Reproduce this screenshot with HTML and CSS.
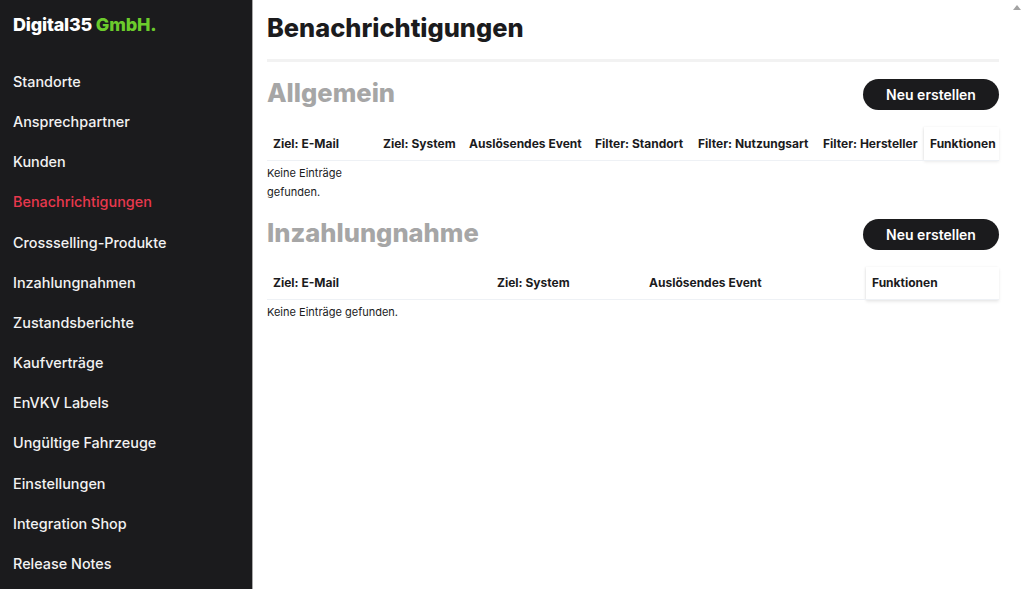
FILE: index.html
```html
<!DOCTYPE html>
<html lang="de">
<head>
    <meta charset="UTF-8">
    <meta name="viewport" content="width=device-width, initial-scale=1.0">
    <title>Benachrichtigungen</title>
    <link rel="stylesheet" href="styles.css">
</head>
<body>
    <aside class="sidebar">
        <div class="logo">Digital35 <span class="logo-accent">GmbH.</span></div>
        <nav class="side-nav">
            <a href="#">Standorte</a>
            <a href="#">Ansprechpartner</a>
            <a href="#">Kunden</a>
            <a href="#" class="active">Benachrichtigungen</a>
            <a href="#">Crossselling-Produkte</a>
            <a href="#">Inzahlungnahmen</a>
            <a href="#">Zustandsberichte</a>
            <a href="#">Kaufverträge</a>
            <a href="#">EnVKV Labels</a>
            <a href="#">Ungültige Fahrzeuge</a>
            <a href="#">Einstellungen</a>
            <a href="#">Integration Shop</a>
            <a href="#">Release Notes</a>
        </nav>
    </aside>

    <main class="main">
        <div class="content">
            <h1 class="page-title">Benachrichtigungen</h1>

            <section class="block">
                <div class="block-head">
                    <h2 class="block-title">Allgemein</h2>
                    <button class="btn-create">Neu erstellen</button>
                </div>
                <table class="data-table">
                    <thead>
                        <tr>
                            <th class="w-110">Ziel: E-Mail</th>
                            <th class="w-86">Ziel: System</th>
                            <th class="w-126">Auslösendes Event</th>
                            <th class="w-103">Filter: Standort</th>
                            <th class="w-125">Filter: Nutzungsart</th>
                            <th class="w-107">Filter: Hersteller</th>
                            <th class="sticky-col">Funktionen</th>
                        </tr>
                    </thead>
                    <tbody>
                        <tr>
                            <td class="empty">Keine Einträge gefunden.</td>
                            <td></td><td></td><td></td><td></td><td></td><td></td>
                        </tr>
                    </tbody>
                </table>
            </section>

            <section class="block">
                <div class="block-head">
                    <h2 class="block-title">Inzahlungnahme</h2>
                    <button class="btn-create">Neu erstellen</button>
                </div>
                <table class="data-table">
                    <thead>
                        <tr>
                            <th class="w-224">Ziel: E-Mail</th>
                            <th class="w-152">Ziel: System</th>
                            <th class="w-223">Auslösendes Event</th>
                            <th class="sticky-col">Funktionen</th>
                        </tr>
                    </thead>
                    <tbody>
                        <tr>
                            <td class="empty nowrap">Keine Einträge gefunden.</td>
                            <td></td><td></td><td></td>
                        </tr>
                    </tbody>
                </table>
            </section>
        </div>
        <div class="scrollbar"><span class="scroll-arrow"></span></div>
    </main>
</body>
</html>
```

FILE: styles.css
```css
* {
    box-sizing: border-box;
}
html, body {
    height: 100%;
}
body {
    margin: 0;
    display: flex;
    font-family: Inter, "Noto Sans", sans-serif;
    background-color: #fff;
    color: #1b1b1d;
    overflow: hidden;
}

/* Sidebar */
.sidebar {
    width: 253px;
    flex-shrink: 0;
    background-color: #1b1b1d;
    border-right: 1px solid #a8a8a8;
    padding: 14px 0 0 13px;
}
.logo {
    color: #fff;
    font-weight: 800;
    font-size: 18px;
    letter-spacing: -0.2px;
    height: 22px;
    line-height: 22px;
}
.logo-accent {
    color: #6ccb2c;
}
.side-nav {
    display: flex;
    flex-direction: column;
    margin-top: 36px;
}
.side-nav a {
    color: #f2f2f2;
    text-decoration: none;
    font-size: 14.4px;
    font-weight: 500;
    height: 40.17px;
    line-height: 20px;
}
.side-nav a.active {
    color: #e8384d;
}

/* Main */
.main {
    flex: 1;
    display: flex;
}
.content {
    flex: 1;
    padding: 0 10px 0 14px;
}
.scrollbar {
    width: 15px;
    flex-shrink: 0;
    display: flex;
    justify-content: center;
    padding-top: 5px;
}
.scroll-arrow {
    width: 0;
    height: 0;
    border-left: 4px solid transparent;
    border-right: 4px solid transparent;
    border-bottom: 5px solid #a3a3a3;
}
.page-title {
    margin: 0;
    padding: 14px 0 17px;
    font-size: 25.4px;
    font-weight: 800;
    line-height: 28px;
    color: #1b1b1d;
    border-bottom: 3px solid #f2f2f2;
}
.block-head {
    display: flex;
    align-items: center;
    justify-content: space-between;
    margin-top: 16px;
}
.block-title {
    margin: 0 0 3px;
    font-size: 25.5px;
    font-weight: 800;
    line-height: 30px;
    color: #a6a6a6;
}
.btn-create {
    height: 31px;
    width: 136px;
    border: none;
    border-radius: 16px;
    background-color: #1b1b1d;
    color: #fff;
    font-family: inherit;
    font-size: 14px;
    font-weight: 600;
    cursor: pointer;
}

/* Tables */
.data-table {
    width: 100%;
    border-collapse: collapse;
    table-layout: fixed;
    margin-top: 16px;
}
.data-table th {
    text-align: left;
    font-size: 12px;
    font-weight: 700;
    padding: 0 6px;
    height: 33px;
    white-space: nowrap;
    border-bottom: 1px solid #eef1f5;
    color: #1b1b1d;
}
.data-table th.sticky-col {
    box-shadow: -1px 0 2px rgba(0, 0, 0, 0.06), 0 2px 3px rgba(0, 0, 0, 0.08);
}
.data-table td {
    padding: 0;
    vertical-align: top;
}
.data-table td.empty {
    font-size: 11px;
    line-height: 19px;
    padding-top: 3px;
    color: #1b1b1d;
}
.data-table td.nowrap {
    white-space: nowrap;
}
.w-110 { width: 110px; }
.w-86 { width: 86px; }
.w-126 { width: 126px; }
.w-103 { width: 103px; }
.w-125 { width: 125px; }
.w-107 { width: 107px; }
.w-224 { width: 224px; }
.w-152 { width: 152px; }
.w-223 { width: 223px; }
```
